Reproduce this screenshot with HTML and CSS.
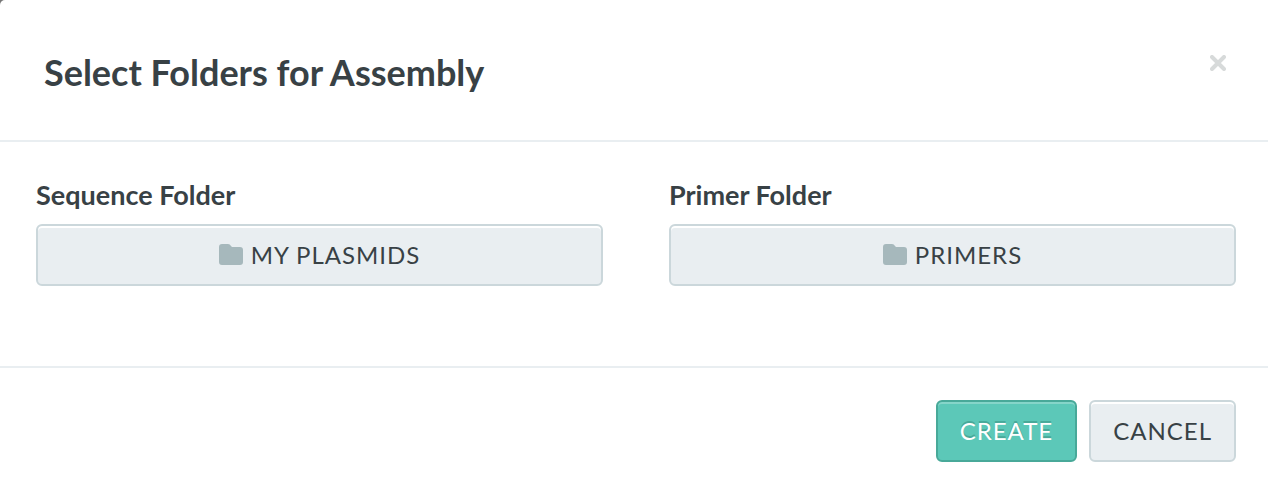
FILE: index.html
```
<!DOCTYPE html>
<html lang="en">
<head>
    <meta charset="UTF-8">
    <meta name="viewport" content="width=device-width, initial-scale=1.0">
    <title>Select Folders for Assembly</title>
    <link rel="stylesheet" href="styles.css">
</head>
<body>
    <div class="modal" role="dialog" aria-labelledby="modalTitle">
        <div class="modal-header">
            <h1 class="modal-title" id="modalTitle">Select Folders for Assembly</h1>
            <button class="close-button" type="button" aria-label="Close">
                <svg width="16" height="16" viewBox="0 0 16 16">
                    <path d="M2 2L14 14M14 2L2 14" fill="none" stroke="currentColor" stroke-width="4" stroke-linecap="round"/>
                </svg>
            </button>
        </div>

        <div class="modal-body">
            <div class="field">
                <label class="field-label" for="sequenceFolder">Sequence Folder</label>
                <button class="button" type="button" id="sequenceFolder">
                    <svg class="folder-icon" width="24" height="22" viewBox="0 0 24 22">
                        <path d="M3 0H9Q11 0 12 2L13 3H21Q24 3 24 6V18Q24 21 21 21H3Q0 21 0 18V3Q0 0 3 0Z" fill="currentColor"/>
                    </svg>
                    <span>MY PLASMIDS</span>
                </button>
            </div>
            <div class="field">
                <label class="field-label" for="primerFolder">Primer Folder</label>
                <button class="button" type="button" id="primerFolder">
                    <svg class="folder-icon" width="24" height="22" viewBox="0 0 24 22">
                        <path d="M3 0H9Q11 0 12 2L13 3H21Q24 3 24 6V18Q24 21 21 21H3Q0 21 0 18V3Q0 0 3 0Z" fill="currentColor"/>
                    </svg>
                    <span>PRIMERS</span>
                </button>
            </div>
        </div>

        <div class="modal-footer">
            <button class="button button-primary" type="button">CREATE</button>
            <button class="button" type="button">CANCEL</button>
        </div>
    </div>
</body>
</html>
```
FILE: styles.css
```
* {
    box-sizing: border-box;
}
body {
    margin: 0;
    background: #777;
    font-family: Lato, "Liberation Sans", sans-serif;
    color: #384145;
}
.modal {
    min-height: 100vh;
    background: white;
    border-top-left-radius: 5px;
}
.modal-header {
    display: flex;
    justify-content: space-between;
    align-items: flex-start;
    padding: 50px 42px 46px 44px;
    border-bottom: 2px solid #e9eef1;
}
.modal-title {
    margin: 0;
    font-size: 36px;
    line-height: 44px;
    font-weight: bold;
}
.close-button {
    display: flex;
    padding: 5px 0;
    border: none;
    background: none;
    color: #d7dada;
    cursor: pointer;
}
.modal-body {
    display: grid;
    grid-template-columns: 1fr 1fr;
    gap: 66px;
    padding: 37px 32px 80px 36px;
}
.field {
    display: flex;
    flex-direction: column;
    gap: 13px;
}
.field-label {
    font-size: 27px;
    line-height: 32px;
    font-weight: bold;
}
.button {
    display: flex;
    justify-content: center;
    align-items: center;
    gap: 8px;
    padding: 14px 22px;
    border: 2px solid #cbd7db;
    border-radius: 6px;
    background: #e9eef1;
    box-shadow: inset 0 2px white;
    color: #384145;
    font-family: inherit;
    font-size: 24px;
    line-height: 30px;
    letter-spacing: 1px;
    cursor: pointer;
}
.button-primary {
    border-color: #48a999;
    background: #5cc8b8;
    box-shadow: inset 0 2px #85d5c9;
    color: white;
    text-shadow: 0 -2px #48a999;
}
.folder-icon {
    color: #a6b8bc;
}
.modal-footer {
    display: flex;
    justify-content: flex-end;
    gap: 12px;
    padding: 32px;
    border-top: 2px solid #e9eef1;
}
```
